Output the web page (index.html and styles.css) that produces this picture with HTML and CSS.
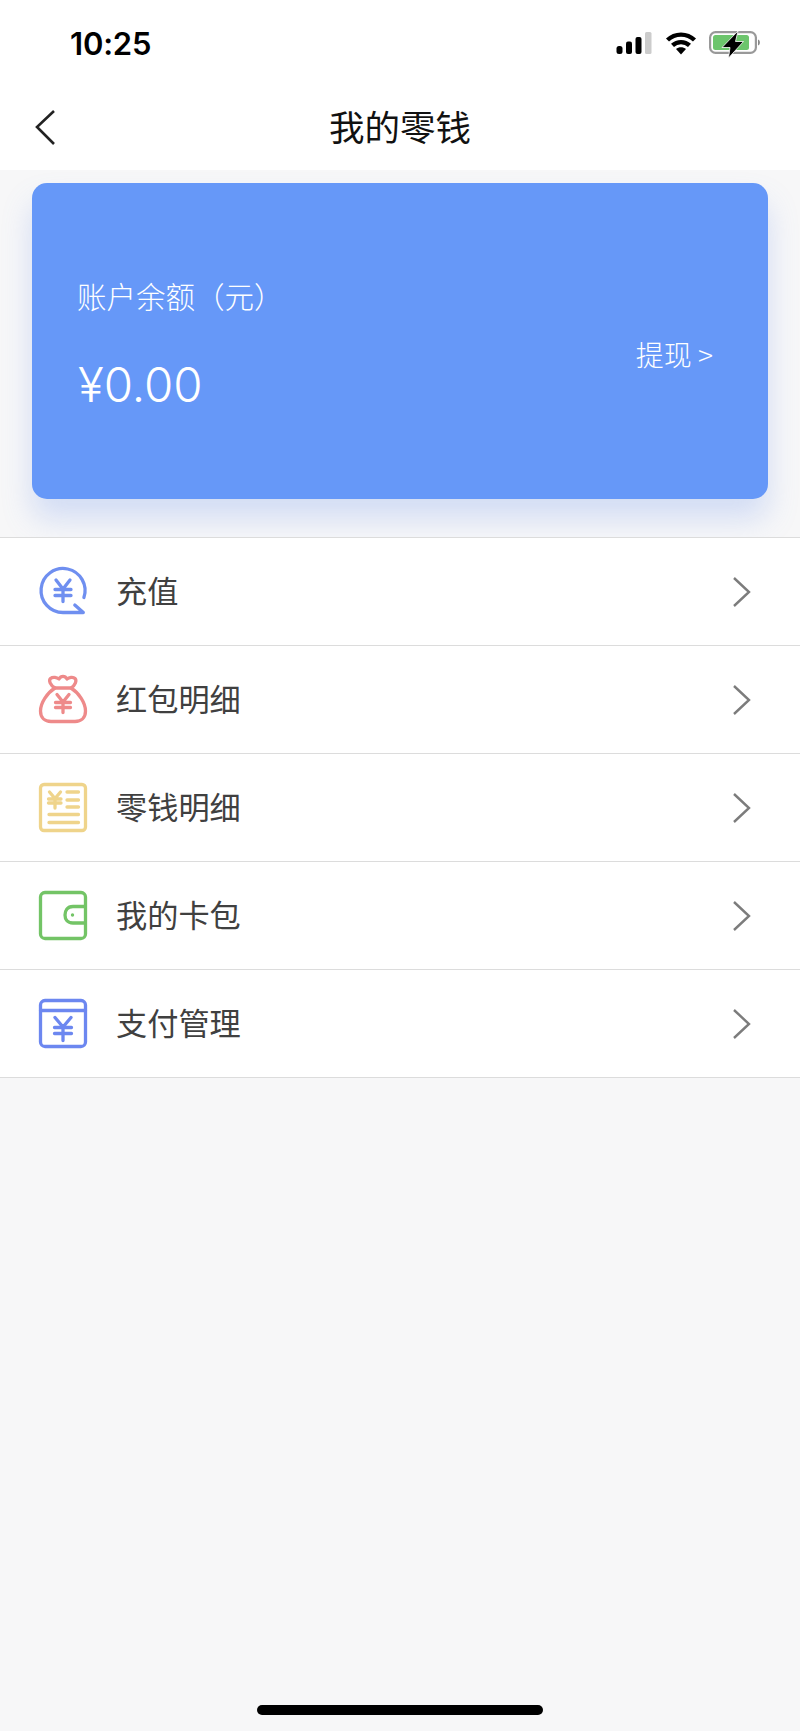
FILE: index.html
```html
<!DOCTYPE html>
<html lang="zh-CN">
<head>
<meta charset="utf-8">
<title>我的零钱</title>
<link rel="stylesheet" href="styles.css">
</head>
<body>
<div class="page">
  <header class="top">
    <div class="status">
      <span class="time">10:25</span>
      <div class="status-icons">
        <svg class="ic-signal" width="36" height="24" viewBox="0 0 36 24"><rect x="0.500" y="15" width="6" height="8" rx="2.500" fill="#000"/><rect x="10" y="10.500" width="6" height="12.500" rx="2" fill="#000"/><rect x="19.500" y="6" width="6" height="17" rx="2" fill="#000"/><rect x="29" y="1" width="6.500" height="22" rx="1.500" fill="#ccc"/></svg>
        <svg class="ic-wifi" width="30" height="24" viewBox="0 0 30 24"><path d="M1.500 9C9 1.800 21 1.800 28.500 9M6.500 14.300C11.200 10 18.800 10 23.500 14.300" fill="none" stroke="#000" stroke-width="4.400"/><path d="M10 18C12.800 15.800 17.200 15.800 20 18L15 23.500Z" fill="#000"/></svg>
        <svg class="ic-battery" width="52" height="26" viewBox="0 0 52 26"><rect x="1.100" y="2.100" width="45.800" height="20.800" rx="5.500" fill="none" stroke="#999" stroke-width="2.200"/><rect x="4" y="5" width="36" height="15" rx="2.500" fill="#6cc56c"/><path d="M49 9.500C51.500 10 51.500 15 49 15.500Z" fill="#888"/><path d="M29 1L13 17.500H21L19.500 28L34.500 11.500H26.500Z" fill="#000" stroke="#fff" stroke-width="0.800"/></svg>
      </div>
    </div>
    <nav class="nav">
      <svg class="back" width="24" height="38" viewBox="0 0 24 38"><path d="M21 3L4 19L21 36" fill="none" stroke="#222" stroke-width="2.600"/></svg>
      <h1 class="title">我的零钱</h1>
    </nav>
  </header>

  <main class="main">
    <section class="card">
      <div class="balance">
        <div class="label">账户余额（元）</div>
        <div class="amount">¥0.00</div>
      </div>
      <div class="withdraw">提现 &gt;</div>
    </section>
  </main>

  <ul class="list">
    <li class="row">
      <svg class="icon" viewBox="0 0 48 48"><g fill="none" stroke="#6f8ff0" stroke-width="3.300" stroke-linecap="round" stroke-linejoin="round"><path d="M44.900 29.500A22 22 0 1 0 24.300 44.500H44.300L35.800 37"/><path d="M17 12L24 21L31 12M16 21.500H32M16 27.500H32M24 21V33.500"/></g></svg>
      <span class="name">充值</span>
      <svg class="chev" width="20" height="32" viewBox="0 0 20 32"><path d="M2 2L17 16L2 30" fill="none" stroke="#7c7c7c" stroke-width="2.400"/></svg>
    </li>
    <li class="row">
      <svg class="icon" viewBox="0 0 48 48"><g fill="none" stroke="#ee8a8a" stroke-width="3.300" stroke-linecap="round" stroke-linejoin="round"><path d="M16 12C8 17 1.500 27 1.500 35C1.500 42 6 45.500 12 45.500H36C42 45.500 46.500 42 46.500 35C46.500 27 40 17 32 12Z"/><path d="M16 12C11 9 9.500 4.500 11.500 2.500C14 0.500 18 1.500 20 3C22 -0.500 26 -0.500 28 3C30 1.500 34 0.500 36 2.500C38 4.500 36.500 9 32 12"/><path d="M18 18.500L24 26L30 18.500M16.500 26.500H31.500M16.500 31.500H31.500M24 26V36.500"/></g></svg>
      <span class="name">红包明细</span>
      <svg class="chev" width="20" height="32" viewBox="0 0 20 32"><path d="M2 2L17 16L2 30" fill="none" stroke="#7c7c7c" stroke-width="2.400"/></svg>
    </li>
    <li class="row">
      <svg class="icon" viewBox="0 0 48 48"><g fill="none" stroke="#efd48b" stroke-width="3.300" stroke-linecap="round" stroke-linejoin="round"><rect x="1.500" y="0.500" width="45" height="46" rx="3.500"/><path d="M10.500 8L16 14.500L21.500 8M9.500 15H22M9.500 19H22M16 14.500V24M28 8H39.500M28 16H39.500M28 23H39.500M10 30.500H39.500M10 38.500H39.500"/></g></svg>
      <span class="name">零钱明细</span>
      <svg class="chev" width="20" height="32" viewBox="0 0 20 32"><path d="M2 2L17 16L2 30" fill="none" stroke="#7c7c7c" stroke-width="2.400"/></svg>
    </li>
    <li class="row">
      <svg class="icon" viewBox="0 0 48 48"><g fill="none" stroke="#73c466" stroke-width="3.300" stroke-linejoin="round"><rect x="1.500" y="0.500" width="45" height="46" rx="4.500"/><path d="M46.500 14.500H34C28 14.500 26 19 26 23S28 31 34 31H46.500"/></g><circle cx="33.500" cy="23" r="1.700" fill="#73c466"/></svg>
      <span class="name">我的卡包</span>
      <svg class="chev" width="20" height="32" viewBox="0 0 20 32"><path d="M2 2L17 16L2 30" fill="none" stroke="#7c7c7c" stroke-width="2.400"/></svg>
    </li>
    <li class="row">
      <svg class="icon" viewBox="0 0 48 48"><g fill="none" stroke="#6c87f0" stroke-width="3.300" stroke-linecap="round" stroke-linejoin="round"><rect x="1.500" y="0.500" width="45" height="46" rx="4.500"/><path d="M1.500 10.500H46.500M16 17.500L24 27L32 17.500M15.500 27.500H32.500M15.500 33.500H32.500M24 27V40.500"/></g></svg>
      <span class="name">支付管理</span>
      <svg class="chev" width="20" height="32" viewBox="0 0 20 32"><path d="M2 2L17 16L2 30" fill="none" stroke="#7c7c7c" stroke-width="2.400"/></svg>
    </li>
  </ul>

  <div class="home-bar"></div>
</div>
</body>
</html>
```
FILE: styles.css
```css
* { box-sizing: border-box; }
html, body { margin: 0; padding: 0; }
body {
  background: #f7f7f8;
  font-family: "Noto Sans CJK SC", "Noto Sans", sans-serif;
}
.page {
  display: flex;
  flex-direction: column;
  height: 1731px;
  overflow: hidden;
}
.top { background: #fff; height: 170px; display: flex; flex-direction: column; }
.status {
  height: 86px;
  display: flex;
  align-items: center;
  justify-content: space-between;
  padding: 0 39px 0 70px;
}
.time {
  font-family: Inter, Roboto, sans-serif;
  font-size: 31px;
  font-weight: 600;
  color: #000;
  letter-spacing: -0.2px;
}
.status-icons { display: flex; align-items: center; gap: 13.5px; }
.status-icons svg { display: block; overflow: visible; }
.nav {
  position: relative;
  height: 84px;
  padding-bottom: 5px;
  display: flex;
  align-items: center;
  justify-content: center;
}
.back { position: absolute; left: 33px; top: 22px; }
.title {
  margin: 0;
  font-size: 35.5px;
  font-weight: 400;
  color: #111;
  line-height: 1;
}
.main { padding: 13px 32px 38px; }
.card {
  height: 316px;
  background: #6698f8;
  border-radius: 15px;
  box-shadow: 0 20px 30px rgba(110, 145, 235, 0.26);
  display: flex;
  align-items: center;
  justify-content: space-between;
  padding: 0 55px 0 46px;
  color: #fff;
}
.balance { display: flex; flex-direction: column; gap: 51px; padding-top: 7px; }
.label { font-size: 29.5px; font-weight: 300; line-height: 1; margin-left: -1px; }
.amount {
  font-family: Inter, sans-serif;
  font-size: 47.5px;
  font-weight: 350;
  line-height: 1;
}
.withdraw { font-size: 28px; font-weight: 300; line-height: 1; margin-top: 26px; }
.list {
  list-style: none;
  margin: 0;
  padding: 0;
  background: #fff;
  border-top: 1px solid #dcdcdc;
}
.row {
  height: 108px;
  display: flex;
  align-items: center;
  padding: 0 48px 0 39px;
  border-bottom: 1px solid #dcdcdc;
}
.icon { width: 48px; height: 48px; flex: none; overflow: visible; }
.name {
  flex: 1;
  margin-left: 29px;
  margin-bottom: 4px;
  font-size: 31.2px;
  color: #404040;
  line-height: 1;
}
.chev { flex: none; display: block; }
.home-bar {
  margin: auto auto 16px;
  width: 286px;
  height: 10px;
  border-radius: 5px;
  background: #000;
}
```
